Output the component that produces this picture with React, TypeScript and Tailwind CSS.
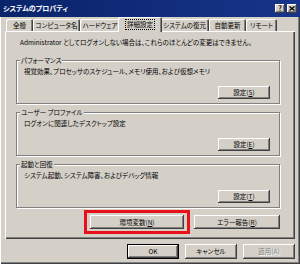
import type {ReactNode} from 'react';

const bevel =
  'shadow-[inset_-1px_-1px_#404040,inset_1px_1px_#ffffff,inset_-2px_-2px_#808080]';

function Key({k}: {k: string}) {
  return <span className="underline underline-offset-[1px]">{k}</span>;
}

function Button({
  children,
  className = '',
  isDefault = false,
}: {
  children: ReactNode;
  className?: string;
  isDefault?: boolean;
}) {
  return (
    <div
      className={`flex items-center justify-center bg-[#d4d0c8] ${
        isDefault
          ? 'shadow-[inset_0_0_0_1px_#000000,inset_-2px_-2px_#404040,inset_2px_2px_#ffffff,inset_-3px_-3px_#808080]'
          : bevel
      } ${className}`}
    >
      {children}
    </div>
  );
}

function Group({
  title,
  text,
  button,
  className = '',
}: {
  title: string;
  text: string;
  button: ReactNode;
  className?: string;
}) {
  return (
    <div
      className={`relative h-[44px] border border-[#808080] shadow-[inset_1px_1px_#ffffff,1px_1px_#ffffff] pl-[7px] pr-[9px] pt-[5px] flex flex-col ${className}`}
    >
      <span className="absolute -top-[5px] left-[3px] bg-[#d4d0c8] px-[1px] leading-[9px]">
        {title}
      </span>
      <p className="leading-[10px]">{text}</p>
      <div className="mt-[10px] flex justify-end">
        <Button className="w-[52px] h-[13px]">{button}</Button>
      </div>
    </div>
  );
}

const tabs = [
  {label: '全般', w: 27},
  {label: 'コンピュータ名', w: 47},
  {label: 'ハードウェア', w: 40},
  {label: '詳細設定', w: 40, active: true},
  {label: 'システムの復元', w: 49},
  {label: '自動更新', w: 37},
  {label: 'リモート', w: 31},
];

export default function App() {
  return (
    <div className="w-[300px] h-[264px] bg-[#d4d0c8] text-black overflow-hidden flex flex-col font-['Noto_Sans_CJK_JP','Noto_Sans',sans-serif] text-[6.5px] leading-none [font-feature-settings:'palt'] shadow-[inset_1px_0_#ffffff,inset_-1px_-1px_#404040,inset_-2px_-2px_#808080]">
      {/* title bar */}
      <div className="h-[17px] shrink-0 flex items-center justify-between pl-[3px] pr-[3px] bg-linear-to-r from-[#0a246a] to-[#16348a]">
        <span className="text-white font-bold text-[7px]">システムのプロパティ</span>
        <div className="flex gap-[2px]">
          <div className={`w-[10px] h-[9px] flex items-center justify-center bg-[#d4d0c8] ${bevel} text-[7px] font-bold`}>
            ?
          </div>
          <div className={`w-[10px] h-[9px] flex items-center justify-center bg-[#d4d0c8] ${bevel}`}>
            <svg width="6" height="5" viewBox="0 0 6 5">
              <path d="M0.5 0.5 L5.5 4.5 M5.5 0.5 L0.5 4.5" stroke="#000" strokeWidth="1.3" />
            </svg>
          </div>
        </div>
      </div>

      <div className="px-[5px] flex flex-col">
        {/* tabs */}
        <div className="h-[14px] flex items-end pl-[1px]">
          {tabs.map((t) =>
            t.active ? (
              <div
                key={t.label}
                style={{width: t.w + 4}}
                className="relative z-10 -mx-[2px] -mb-[1px] h-[15px] bg-[#d4d0c8] rounded-t-[2px] shadow-[inset_1px_1px_#ffffff,inset_-1px_0_#404040,inset_-2px_0_#808080] flex items-center justify-center"
              >
                <span className="outline-1 outline-dotted outline-black px-[1px] py-[1px]">{t.label}</span>
              </div>
            ) : (
              <div
                key={t.label}
                style={{width: t.w}}
                className="h-[12px] rounded-t-[2px] shadow-[inset_1px_1px_#ffffff,inset_-1px_0_#404040,inset_-2px_0_#808080] flex items-center justify-center"
              >
                {t.label}
              </div>
            ),
          )}
        </div>

        {/* panel */}
        <div className="h-[208px] pl-[11px] pr-[15px] pt-[6px] flex flex-col shadow-[inset_1px_1px_#ffffff,inset_-1px_-1px_#404040,inset_-2px_-2px_#808080]">
          <p className="pl-[4px] leading-[10px]">
            Administrator としてログオンしない場合は、これらのほとんどの変更はできません。
          </p>
          <Group
            className="mt-[13px]"
            title="パフォーマンス"
            text="視覚効果、プロセッサのスケジュール、メモリ使用、および仮想メモリ"
            button={<>設定(<Key k="S" />)</>}
          />
          <Group
            className="mt-[8px]"
            title="ユーザー プロファイル"
            text="ログオンに関連したデスクトップ設定"
            button={<>設定(<Key k="E" />)</>}
          />
          <Group
            className="mt-[8px]"
            title="起動と回復"
            text="システム起動、システム障害、およびデバッグ情報"
            button={<>設定(<Key k="T" />)</>}
          />
          <div className="mt-[7px] flex justify-end gap-[10px]">
            <div className="relative">
              <Button className="w-[94px] h-[14px]">
                環境変数(<Key k="N" />)
              </Button>
              <div className="absolute -inset-x-[6px] -inset-y-[5px] border-[3px] border-[#e8101a] pointer-events-none" />
            </div>
            <Button className="w-[86px] h-[14px]">
              エラー報告(<Key k="R" />)
            </Button>
          </div>
        </div>

        {/* dialog buttons */}
        <div className="mt-[5px] flex justify-end gap-[6px]">
          <Button isDefault className="w-[52px] h-[15px]">
            OK
          </Button>
          <Button className="w-[52px] h-[15px]">キャンセル</Button>
          <Button className="w-[52px] h-[15px] text-[#808080] [text-shadow:1px_1px_#ffffff]">
            適用(A)
          </Button>
        </div>
      </div>
    </div>
  );
}
